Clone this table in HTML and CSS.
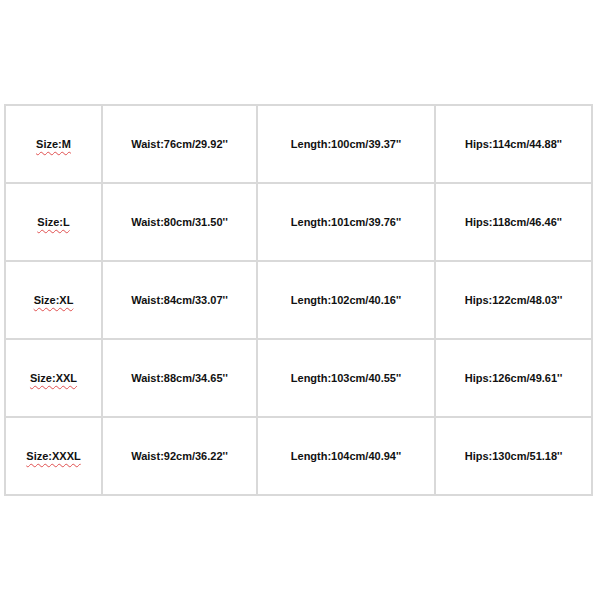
FILE: index.html
```html
<!DOCTYPE html>
<html>
<head>
<meta charset="utf-8">
<link rel="stylesheet" href="styles.css">
</head>
<body>
<table class="chart">
  <colgroup>
    <col class="c1"><col class="c2"><col class="c3"><col class="c4">
  </colgroup>
  <tr><td><span class="sp">Size:M</span></td><td>Waist:76cm/29.92''</td><td>Length:100cm/39.37''</td><td>Hips:114cm/44.88''</td></tr>
  <tr><td><span class="sp">Size:L</span></td><td>Waist:80cm/31.50''</td><td>Length:101cm/39.76''</td><td>Hips:118cm/46.46''</td></tr>
  <tr><td><span class="sp">Size:XL</span></td><td>Waist:84cm/33.07''</td><td>Length:102cm/40.16''</td><td>Hips:122cm/48.03''</td></tr>
  <tr><td><span class="sp">Size:XXL</span></td><td>Waist:88cm/34.65''</td><td>Length:103cm/40.55''</td><td>Hips:126cm/49.61''</td></tr>
  <tr><td><span class="sp">Size:XXXL</span></td><td>Waist:92cm/36.22''</td><td>Length:104cm/40.94''</td><td>Hips:130cm/51.18''</td></tr>
</table>
</body>
</html>
```
FILE: styles.css
```css
html, body {
  margin: 0;
  padding: 0;
  background: #ffffff;
}
body {
  padding: 104px 0 0 4px;
  font-family: "Liberation Sans", Arial, sans-serif;
}
.chart {
  border-collapse: collapse;
  table-layout: fixed;
  width: 589px;
  border-right: 2px solid #bdbdbd;
  border-bottom: 2px solid #bdbdbd;
}
.c1 { width: 97px; }
.c2 { width: 155px; }
.c3 { width: 178px; }
.c4 { width: 157px; }
.chart td {
  height: 76px;
  padding: 0;
  border: 2px solid #d9d9d9;
  text-align: center;
  vertical-align: middle;
  font-size: 11px;
  font-weight: bold;
  color: #111;
}
.sp {
  text-decoration: underline wavy #e05050;
  text-decoration-thickness: 1px;
  text-underline-offset: 3px;
}
```
